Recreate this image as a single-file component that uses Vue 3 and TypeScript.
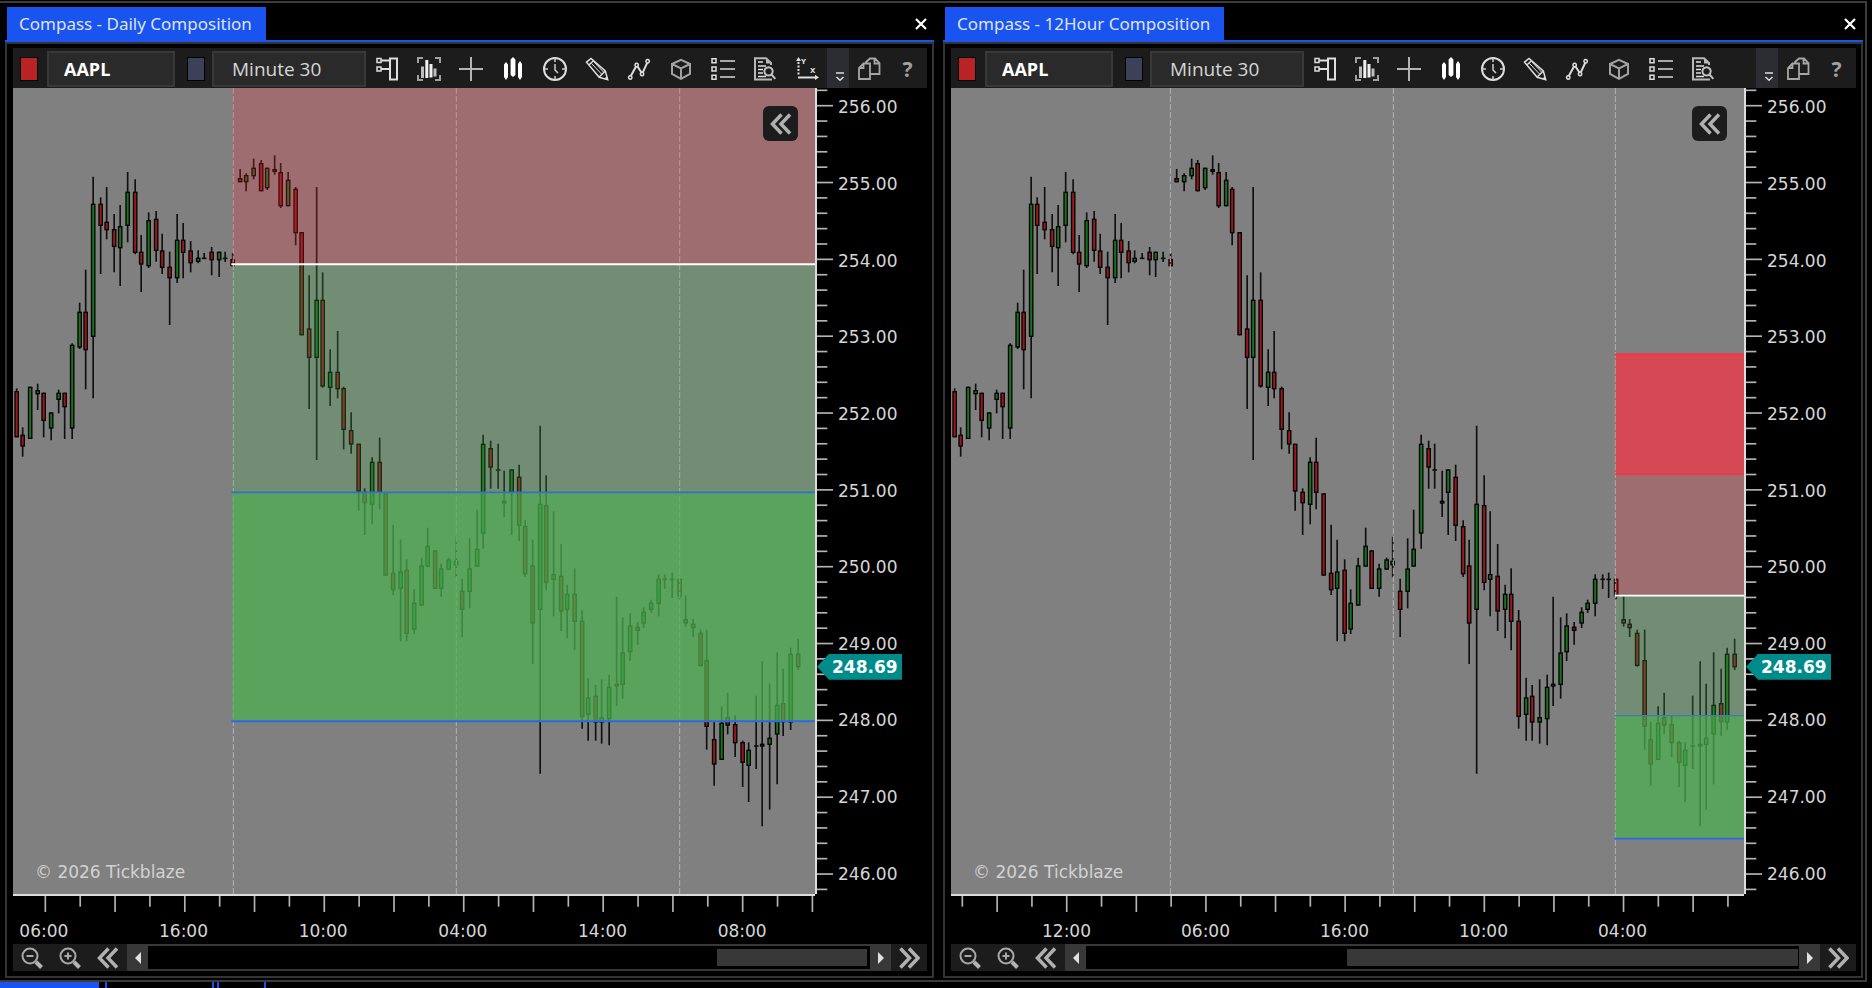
<script setup lang="ts">
import { ref } from 'vue'

type Candle = [high: number, top: number, bottom: number, low: number, side: 'u' | 'd' | 'n']

interface Shape {
  d: string
  fill?: boolean
  w?: number
  tone?: string
}

interface Tool {
  label: string
  shapes: Shape[]
  marks?: { x: number; y: number; t: string }[]
}

interface Zone {
  from: number
  to: number
  color: string
}

interface Level {
  y: number
  w: number
  color: string
}

interface Chart {
  id: string
  title: string
  width: number
  pitch: number
  sessions: number[]
  zoneStart: number
  zones: Zone[]
  levels: Level[]
  tickStart: number
  tickPitch: number
  majorFirst: boolean
  times: string[]
  labelStart: number
  labelStep: number
  thumbStart: number
  thumbWidth: number
  tools: number
}

// Plot coordinates use three units for every pixel.
const PLOT_HEIGHT = 2418
const CANDLE_TOP = 156
const SNAP = 4.5

const candles: Candle[] = [
  [745, 753, 892, 892, 'd'], [862, 884, 920, 950, 'd'], [740, 740, 897, 897, 'u'], [731, 750, 763, 810, 'u'],
  [758, 758, 843, 892, 'd'], [817, 817, 866, 901, 'u'], [749, 758, 780, 820, 'u'], [758, 758, 802, 897, 'd'],
  [610, 614, 866, 897, 'u'], [488, 515, 623, 627, 'u'], [389, 515, 631, 748, 'd'], [110, 191, 591, 775, 'u'],
  [172, 191, 258, 402, 'd'], [141, 245, 271, 298, 'd'], [222, 267, 321, 397, 'd'], [195, 258, 325, 438, 'u'],
  [96, 155, 258, 307, 'u'], [118, 155, 339, 343, 'd'], [285, 335, 374, 456, 'd'], [217, 240, 379, 384, 'u'],
  [213, 236, 333, 365, 'd'], [281, 331, 384, 402, 'd'], [335, 380, 415, 555, 'd'], [222, 299, 415, 429, 'u'],
  [249, 299, 339, 415, 'd'], [303, 331, 370, 397, 'd'], [331, 353, 366, 370, 'u'], [339, 353, 357, 357, 'n'],
  [321, 335, 361, 406, 'd'], [335, 335, 361, 411, 'u'], [335, 353, 357, 366, 'n'], [339, 357, 379, 379, 'd'],
  [87, 114, 127, 127, 'd'], [100, 105, 127, 154, 'u'], [56, 83, 109, 118, 'u'], [60, 69, 154, 154, 'd'],
  [83, 83, 145, 150, 'u'], [46, 87, 96, 104, 'd'], [69, 96, 199, 204, 'd'], [96, 119, 199, 199, 'u'],
  [141, 146, 280, 316, 'd'], [276, 276, 586, 586, 'd'], [406, 565, 654, 807, 'd'], [141, 479, 654, 960, 'u'],
  [397, 479, 740, 743, 'd'], [628, 695, 744, 798, 'u'], [573, 695, 748, 775, 'd'], [740, 744, 870, 928, 'd'],
  [817, 870, 914, 941, 'd'], [911, 911, 1055, 1112, 'd'], [1045, 1055, 1090, 1185, 'd'], [952, 965, 1095, 1153, 'u'],
  [893, 965, 1059, 1108, 'd'], [1060, 1060, 1307, 1307, 'd'], [1154, 1298, 1351, 1365, 'd'], [1199, 1294, 1347, 1504, 'u'],
  [1258, 1289, 1482, 1504, 'd'], [1348, 1388, 1469, 1482, 'u'], [1253, 1276, 1397, 1397, 'u'], [1163, 1217, 1280, 1280, 'u'],
  [1231, 1231, 1347, 1347, 'd'], [1271, 1285, 1347, 1370, 'u'], [1253, 1258, 1289, 1289, 'u'], [1190, 1262, 1276, 1312, 'u'],
  [1316, 1352, 1410, 1491, 'd'], [1195, 1285, 1356, 1405, 'u'], [1109, 1226, 1280, 1280, 'u'], [884, 911, 1181, 1226, 'u'],
  [902, 924, 983, 1046, 'd'], [911, 988, 992, 1046, 'n'], [992, 1082, 1091, 1131, 'u'], [988, 988, 1059, 1185, 'u'],
  [974, 1010, 1158, 1203, 'd'], [1141, 1158, 1303, 1311, 'd'], [1199, 1276, 1451, 1572, 'd'], [857, 1091, 1410, 1901, 'u'],
  [1006, 1095, 1329, 1351, 'd'], [1114, 1302, 1320, 1429, 'u'], [1212, 1307, 1415, 1473, 'd'], [1334, 1361, 1410, 1495, 'u'],
  [1285, 1361, 1446, 1531, 'd'], [1410, 1442, 1731, 1766, 'd'], [1613, 1672, 1725, 1802, 'u'], [1635, 1667, 1748, 1802, 'd'],
  [1618, 1731, 1748, 1811, 'u'], [1604, 1640, 1738, 1816, 'u'], [1370, 1631, 1640, 1698, 'u'], [1432, 1537, 1635, 1676, 'u'],
  [1420, 1456, 1537, 1563, 'u'], [1446, 1460, 1473, 1514, 'd'], [1402, 1415, 1451, 1464, 'u'], [1379, 1388, 1410, 1419, 'u'],
  [1303, 1316, 1392, 1429, 'u'], [1303, 1316, 1320, 1347, 'n'], [1298, 1316, 1320, 1374, 'n'], [1316, 1316, 1370, 1378, 'd'],
  [1366, 1437, 1451, 1460, 'd'], [1437, 1451, 1465, 1491, 'd'], [1469, 1478, 1578, 1580, 'd'], [1469, 1560, 1761, 1829, 'd'],
  [1745, 1797, 1874, 1937, 'd'], [1699, 1748, 1860, 1860, 'u'], [1658, 1731, 1757, 1783, 'd'], [1726, 1752, 1810, 1851, 'd'],
  [1802, 1806, 1869, 1941, 'd'], [1807, 1829, 1878, 1986, 'u'], [1667, 1816, 1820, 1887, 'n'], [1564, 1811, 1820, 2059, 'd'],
  [1631, 1793, 1815, 2009, 'u'], [1537, 1694, 1784, 1933, 'u'], [1586, 1689, 1747, 1788, 'd'], [1523, 1541, 1748, 1770, 'u'],
  [1496, 1541, 1582, 1590, 'd'],
]

const RED_SOFT = 'rgba(248, 52, 64, 0.25)'
const RED_STRONG = 'rgba(242, 54, 69, 0.75)'
const GREEN_SOFT = 'rgba(76, 175, 80, 0.25)'
const GREEN_STRONG = 'rgba(76, 175, 80, 0.75)'

const charts: Chart[] = [
  {
    id: 'daily',
    title: 'Compass - Daily Composition',
    width: 2406,
    pitch: 4.652,
    sessions: [661, 1330, 2000],
    zoneStart: 658,
    zones: [
      { from: 0, to: 529, color: RED_SOFT },
      { from: 529, to: 1213, color: GREEN_SOFT },
      { from: 1213, to: 1900, color: GREEN_STRONG },
    ],
    levels: [
      { y: 529, w: 6, color: '#ffffff' },
      { y: 1213, w: 5, color: '#3470cc' },
      { y: 1900, w: 6, color: '#2f66e8' },
    ],
    tickStart: 97,
    tickPitch: 104.6,
    majorFirst: true,
    times: ['06:00', '16:00', '10:00', '04:00', '14:00', '08:00'],
    labelStart: -117,
    labelStep: 419,
    thumbStart: 569 / 722,
    thumbWidth: 150 / 722,
    tools: 11,
  },
  {
    id: 'half-day',
    title: 'Compass - 12Hour Composition',
    width: 2379,
    pitch: 4.645,
    sessions: [658, 1327, 1993],
    zoneStart: 1994,
    zones: [
      { from: 796, to: 1159, color: RED_STRONG },
      { from: 1159, to: 1523, color: RED_SOFT },
      { from: 1523, to: 1883, color: GREEN_SOFT },
      { from: 1883, to: 2252, color: GREEN_STRONG },
    ],
    levels: [
      { y: 800, w: 7, color: '#f23645' },
      { y: 1159, w: 4, color: '#f23645' },
      { y: 1523, w: 5, color: '#ffffff' },
      { y: 1883, w: 4, color: '#4078b8' },
      { y: 2252, w: 5, color: '#2f66e8' },
    ],
    tickStart: 34,
    tickPitch: 104.4,
    majorFirst: false,
    times: ['12:00', '06:00', '16:00', '10:00', '04:00'],
    labelStart: 138,
    labelStep: 417,
    thumbStart: 261 / 713,
    thumbWidth: 451 / 713,
    tools: 10,
  },
]

const prices = Array.from({ length: 11 }, (_, i) => (256 - i).toFixed(2))
const priceTicks = Array.from({ length: 53 }, (_, i) => ({ y: 7 + i * 46.1, major: i % 5 === 1 }))

const symbols = ref(charts.map(() => 'AAPL'))
const intervals = ref(charts.map(() => 'Minute 30'))

function bars(chart: Chart) {
  return candles.map(([high, top, bottom, low, side], i) => ({
    x: 11 + SNAP * Math.floor(i * chart.pitch + 0.2),
    high: high + CANDLE_TOP,
    top: top + CANDLE_TOP,
    bottom: bottom + CANDLE_TOP,
    low: low + CANDLE_TOP,
    side,
  }))
}

function timeTicks(chart: Chart) {
  return Array.from({ length: 23 }, (_, i) => ({
    x: chart.tickStart + i * chart.tickPitch,
    h: (i % 2 === 0) === chart.majorFirst ? 48 : 32,
  }))
}

function labelStyle(chart: Chart) {
  return {
    marginLeft: `${(chart.labelStart / chart.width) * 100}%`,
    width: `${((chart.labelStep * chart.times.length) / chart.width) * 100}%`,
  }
}

const tools: Tool[] = [
  {
    label: 'Order panel',
    shapes: [
      { d: 'M15 1.5h7v21h-7z', w: 2 },
      { d: 'M2 1.5h4v4H2zM2 10h4v4H2z' },
      { d: 'M6 3.5h9M6 12h9', w: 2 },
    ],
  },
  {
    label: 'Fit chart',
    shapes: [
      { d: 'M1 6V1h5M18 1h5v5M23 18v5h-5M6 23H1v-5', w: 2, tone: '#a0a0a0' },
      { d: 'M4 9.5h3V21H4zM16.5 11.5h3v8h-3z', fill: true, tone: '#bdbdbd' },
      { d: 'M8.3 3h3v18h-3zM12.5 7h3v13.5h-3z', fill: true, tone: '#f0f0f0' },
    ],
  },
  { label: 'Crosshair', shapes: [{ d: 'M12 0v24M0 12h24', w: 2, tone: '#b4b4b4' }] },
  {
    label: 'Chart style',
    shapes: [
      { d: 'M3 7.5 5 5l2 2.5V20l-2 3-2-3zM9.6 2.5 12 0l2.4 2.5V18L12 20l-2.4-2zM17 7l2-3 2 3v13l-2 3-2-3z', fill: true, tone: '#ffffff' },
    ],
  },
  {
    label: 'Sessions',
    shapes: [
      { d: 'M12 1a11 11 0 1 0 0 22 11 11 0 0 0 0-22z', w: 2 },
      { d: 'M12 1v4M12 19v4M1 12h4M19 12h4M12 7v6l3 3', tone: '#cfcfcf' },
    ],
  },
  {
    label: 'Draw',
    shapes: [
      { d: 'M1.5 5.2 6 1.5 20.3 14l2.4 8.6-8.5-2.3zM14 20.3l6.3-6.3M3.8 8 8.5 3.7' },
      { d: 'M6.5 6.5 17 17.5M9 5l9.5 10', w: 1 },
      { d: 'M19 22l3.7.7-.7-3.5z', fill: true },
    ],
  },
  {
    label: 'Indicators',
    shapes: [
      { d: 'M3.8 19 9 9.5M10.5 9.5l4 6M15.8 15.4l4.4-9.6', w: 2 },
      { d: 'M3.2 18.8a1.7 1.7 0 1 0 .1 0zM9.6 6.3a1.7 1.7 0 1 0 .1 0zM15 15.3a1.7 1.7 0 1 0 .1 0zM20.6 2.6a1.7 1.7 0 1 0 .1 0z' },
    ],
  },
  {
    label: 'Objects',
    shapes: [{ d: 'M12 2.8 21 7v10l-9 4.8L3 17V7zM3 7l9 4.5L21 7M12 11.5v10', w: 2, tone: '#a3a3a3' }],
  },
  {
    label: 'List',
    shapes: [
      { d: 'M1 1.8h4v4H1zM1 10h4v4H1zM1 18.3h4v4H1z' },
      { d: 'M9 4h15M9 12h15M9 20h15', w: 2, tone: '#a8a8a8' },
    ],
  },
  {
    label: 'Data window',
    shapes: [
      { d: 'M18 8V6l-5-4.8H2v21.3h17', w: 2, tone: '#b8b8b8' },
      { d: 'M13 1v5.5h5.5z', fill: true, tone: '#b8b8b8' },
      { d: 'M5 5h5M5 9h8M5 12.5h5M5 16h5M5 19.5h8' },
      { d: 'M15.5 10.2a4.2 4.2 0 1 0 .1 0zM18.5 17.5l3.8 4.3', w: 2, tone: '#c4c4c4' },
    ],
  },
  {
    label: 'Axes',
    shapes: [
      { d: 'M3.5 0 6 4H1zM20 17.8l4 2.6-4 2.6z', fill: true },
      { d: 'M3.5 5v2M3.5 8.5v2M3.5 12v2M3.5 15.5v2M3 20.4h18', w: 2 },
    ],
    marks: [
      { x: 6, y: 7, t: 'Y' },
      { x: 15, y: 16, t: 'X' },
    ],
  },
]
</script>

<template>
  <div class="app">
    <main class="frame">
      <section v-for="(chart, c) in charts" :key="chart.id" class="panel" :aria-label="chart.title">
        <header class="panel-head">
          <h2 class="tab">{{ chart.title }}</h2>
          <button class="close" type="button" aria-label="Close">
            <svg viewBox="0 0 12 12" width="12" height="12"><path d="M1 1l10 10M11 1L1 11" stroke="#fff" stroke-width="2.2" /></svg>
          </button>
        </header>

        <div class="panel-body">
          <div class="toolbar">
            <button class="swatch red" type="button" aria-label="Symbol link colour"></button>
            <input v-model="symbols[c]" class="symbol" type="text" aria-label="Symbol" />
            <button class="swatch blue" type="button" aria-label="Interval link colour"></button>
            <input v-model="intervals[c]" class="interval" type="text" aria-label="Interval" />
            <div class="tools">
              <button v-for="tool in tools.slice(0, chart.tools)" :key="tool.label" class="tool" type="button" :aria-label="tool.label">
                <svg viewBox="0 0 24 24" width="24" height="24">
                  <path
                    v-for="(s, k) in tool.shapes"
                    :key="k"
                    :d="s.d"
                    :fill="s.fill ? (s.tone ?? '#dedede') : 'none'"
                    :stroke="s.fill ? 'none' : (s.tone ?? '#dedede')"
                    :stroke-width="s.w ?? 1.5"
                  />
                  <text v-for="m in tool.marks ?? []" :key="m.t" class="mark" :x="m.x" :y="m.y">{{ m.t }}</text>
                </svg>
              </button>
            </div>
            <button class="overflow" type="button" aria-label="More tools">
              <svg viewBox="0 0 10 10" width="10" height="10"><path d="M1 1h8M1.5 5 5 8.300 8.500 5" fill="none" stroke="#dcdcdc" stroke-width="1.5" /></svg>
            </button>
            <button class="side-tool" type="button" aria-label="Duplicate">
              <svg viewBox="0 0 24 24" width="24" height="24">
                <path
                  d="M13 9V17.5V22H2V11l4.5-4.5H13V9M2 11h4.5V6.5M9 6V5l4-3.5h5L22.5 6v11H13M17.5 1.5V6.5h5"
                  fill="none"
                  stroke="#a6a6a6"
                  stroke-width="1.8"
                />
              </svg>
            </button>
            <button class="side-tool help" type="button" aria-label="Help">?</button>
          </div>

          <div class="chart">
            <div class="plot">
              <svg class="fill" :viewBox="`0 0 ${chart.width} ${PLOT_HEIGHT}`" preserveAspectRatio="none" role="img" aria-label="Price candles">
                <g v-for="(b, i) in bars(chart)" :key="i">
                  <path :d="`M${b.x} ${b.high}V${b.low}`" class="wick" />
                  <path v-if="b.side === 'n'" :d="`M${b.x - 7} ${b.top + 2}h14`" class="wick" />
                  <rect
                    v-else
                    :x="b.x - 5"
                    :y="b.top + 2"
                    width="10"
                    :height="Math.max(b.bottom - b.top - 4, 3)"
                    :class="b.side === 'u' ? 'up' : 'down'"
                  />
                </g>
                <path v-for="s in chart.sessions" :key="s" :d="`M${s} 0V${PLOT_HEIGHT}`" class="session" />
                <rect
                  v-for="z in chart.zones"
                  :key="z.from"
                  :x="chart.zoneStart"
                  :y="z.from"
                  :width="chart.width - chart.zoneStart"
                  :height="z.to - z.from"
                  :fill="z.color"
                />
                <path
                  v-for="l in chart.levels"
                  :key="l.y"
                  :d="`M${chart.zoneStart - 3} ${l.y}H${chart.width}`"
                  :stroke="l.color"
                  :stroke-width="l.w"
                />
              </svg>
              <button class="collapse" type="button" aria-label="Collapse">
                <svg viewBox="0 0 22 22" width="22" height="22"><path d="M11.5 1.5 2.5 11l9 9.500M20 1.500 11 11l9 9.500" class="chevrons" /></svg>
              </button>
              <small class="copyright">© 2026 Tickblaze</small>
            </div>

            <div class="price-axis">
              <svg class="price-ticks" :viewBox="`0 0 48 ${PLOT_HEIGHT}`" preserveAspectRatio="none">
                <path v-for="t in priceTicks" :key="t.y" :d="`M0 ${t.y}H${t.major ? 48 : 31}`" class="tick" />
              </svg>
              <div class="price-labels">
                <span v-for="p in prices" :key="p">{{ p }}</span>
              </div>
              <strong class="price-tag">248.69</strong>
            </div>

            <div class="time-axis">
              <svg class="time-ticks" :viewBox="`0 0 ${chart.width} 48`" preserveAspectRatio="none">
                <path v-for="t in timeTicks(chart)" :key="t.x" :d="`M${t.x} 0V${t.h}`" class="tick" />
              </svg>
              <div class="time-labels" :style="labelStyle(chart)">
                <span v-for="t in chart.times" :key="t">{{ t }}</span>
              </div>
            </div>
          </div>

          <div class="scroller">
            <button class="nav" type="button" aria-label="Zoom out">
              <svg viewBox="0 0 22 22" width="22" height="22">
                <circle cx="9" cy="9" r="7.5" class="lens" /><path d="M5.5 9h7" class="lens" /><path d="M15 15l5.5 5.5" class="handle" />
              </svg>
            </button>
            <button class="nav" type="button" aria-label="Zoom in">
              <svg viewBox="0 0 22 22" width="22" height="22">
                <circle cx="9" cy="9" r="7.5" class="lens" /><path d="M5.5 9h7M9 5.5v7" class="lens" /><path d="M15 15l5.5 5.5" class="handle" />
              </svg>
            </button>
            <button class="nav" type="button" aria-label="Scroll to start">
              <svg viewBox="0 0 22 22" width="22" height="22"><path d="M11.5 1.5 2.5 11l9 9.5M20 1.5 11 11l9 9.5" class="chevrons" /></svg>
            </button>
            <button class="step" type="button" aria-label="Scroll left">
              <svg viewBox="0 0 6 12" width="6" height="12"><path d="M6 0v12L0 6z" fill="#e0e0e0" /></svg>
            </button>
            <div class="track">
              <div class="thumb" :style="{ marginLeft: `${chart.thumbStart * 100}%`, width: `${chart.thumbWidth * 100}%` }"></div>
            </div>
            <button class="step" type="button" aria-label="Scroll right">
              <svg viewBox="0 0 6 12" width="6" height="12"><path d="M0 0v12l6-6z" fill="#e0e0e0" /></svg>
            </button>
            <button class="nav end" type="button" aria-label="Scroll to end">
              <svg viewBox="0 0 22 22" width="22" height="22"><path d="M2.5 1.5 11.5 11l-9 9.5M11 1.5 20 11l-9 9.5" class="chevrons" /></svg>
            </button>
          </div>
        </div>
      </section>
    </main>

    <footer class="dock">
      <span class="dock-tab active"></span>
      <span class="dock-tab wide"></span>
      <span class="dock-tab narrow"></span>
    </footer>
  </div>
</template>

<style>
html,
body {
  margin: 0;
  background: #000;
}
</style>

<style scoped>
.app {
  box-sizing: border-box;
  display: flex;
  flex-direction: column;
  height: 100vh;
  min-height: 480px;
  padding: 1px 5px 0 0;
  overflow: hidden;
  background: #000;
  color: #d6d6d6;
  font-family: 'DejaVu Sans', Verdana, sans-serif;
  font-size: 17px;
}

button,
input {
  box-sizing: border-box;
  margin: 0;
  padding: 0;
  border: 0;
  border-radius: 0;
  background: none;
  color: inherit;
  font: inherit;
}

svg {
  display: block;
}

.frame {
  display: grid;
  flex: 1;
  grid-template-columns: minmax(0, 929fr) minmax(0, 920fr);
  gap: 9px;
  min-height: 0;
  padding: 4px 2px 2px 5px;
  border: solid #3c3c3c;
  border-width: 2px 2px 2px 0;
}

.panel {
  display: flex;
  flex-direction: column;
  min-height: 0;
}

.panel-head {
  display: flex;
  align-items: center;
  justify-content: space-between;
  height: 33px;
  padding: 0 7px 0 2px;
  border-bottom: 2px solid #1a54f0;
}

.tab {
  margin: 0;
  padding: 0 14px 0 12px;
  background: #1a54f0;
  color: #dfe3ee;
  font: 400 17px/34px 'Noto Sans', 'Open Sans', sans-serif;
  white-space: nowrap;
}

.close {
  display: flex;
}

.panel-body {
  display: flex;
  flex: 1;
  flex-direction: column;
  min-height: 0;
  padding: 4px 5px 5px 6px;
  border: 2px solid #343434;
}

.toolbar {
  box-sizing: border-box;
  display: flex;
  align-items: center;
  height: 40px;
  padding-top: 2px;
  background: #1c1c1c;
  font-family: 'Open Sans', 'Noto Sans', sans-serif;
}

.swatch {
  flex: none;
  width: 18px;
  height: 24px;
  border: 1px solid #000;
}

.red {
  margin-left: 7px;
  background: #b92323;
}

.blue {
  margin-left: 12px;
  background: #3c4058;
}

.symbol,
.interval {
  flex: none;
  height: 36px;
  border: 2px solid #383838;
  background: #2a2a2a;
}

.symbol {
  width: 128px;
  margin-left: 9px;
  padding-left: 15px;
  color: #fff;
  font-size: 18px;
  font-weight: 700;
}

.interval {
  width: 154px;
  margin-left: 7px;
  padding-left: 18px;
  font-size: 19px;
}

.tools {
  display: flex;
  flex: 1;
  min-width: 0;
  overflow: hidden;
}

.tool {
  display: flex;
  flex: none;
  justify-content: center;
  width: 42px;
}

.mark {
  fill: #dedede;
  font: 700 7px 'DejaVu Sans', sans-serif;
}

.overflow {
  display: flex;
  flex: none;
  align-items: flex-end;
  align-self: stretch;
  justify-content: flex-end;
  width: 22px;
  margin-top: -2px;
  padding: 0 4px 6px 0;
  background: #2b2d33;
}

.side-tool {
  display: flex;
  flex: none;
  justify-content: center;
  width: 39px;
  color: #a0a0a0;
}

.help {
  font: 700 21px/28px 'Noto Sans', sans-serif;
}

.chart {
  display: grid;
  flex: 1;
  grid-template-rows: minmax(0, 1fr) 50px;
  grid-template-columns: minmax(0, 1fr) 112px;
  min-height: 0;
}

.plot {
  position: relative;
  min-height: 0;
  background: #808080;
}

.fill {
  width: 100%;
  height: 100%;
}

.wick {
  fill: none;
  stroke: #101010;
  stroke-width: 5;
}

.up,
.down {
  stroke: #000;
  stroke-width: 4;
}

.up {
  fill: #157518;
}

.down {
  fill: #9c181a;
}

.session {
  fill: none;
  stroke: #b4b4b4;
  stroke-width: 3;
  stroke-dasharray: 18 6;
}

.tick {
  fill: none;
  stroke: #b4b4b4;
  stroke-width: 5;
}

.collapse {
  position: absolute;
  top: 18px;
  right: 17px;
  display: flex;
  align-items: center;
  justify-content: center;
  width: 35px;
  height: 35px;
  border-radius: 6px;
  background: #1c1c1c;
}

.chevrons {
  fill: none;
  stroke: #b0b0b0;
  stroke-width: 3.5;
}

.copyright {
  position: absolute;
  bottom: 11px;
  left: 22px;
  color: #d2d2d2;
  font-size: 17px;
  line-height: 22px;
}

.price-axis {
  position: relative;
  display: flex;
  min-height: 0;
  border-left: 2px solid #dcdcdc;
}

.price-ticks {
  flex: none;
  width: 16px;
  height: 100%;
}

.price-labels {
  display: flex;
  flex-direction: column;
  margin: -19px 0 -18px 5px;
}

.price-labels span {
  display: flex;
  flex: 1;
  align-items: center;
}

.price-tag {
  position: absolute;
  top: 70.2%;
  left: 0;
  box-sizing: border-box;
  width: 85px;
  padding-left: 15px;
  background: #008b8b;
  clip-path: polygon(0 50%, 12px 0, 100% 0, 100% 100%, 12px 100%);
  color: #fff;
  font-weight: 700;
  line-height: 26px;
}

.time-axis {
  min-width: 0;
  border-top: 2px solid #dcdcdc;
}

.time-ticks {
  width: 100%;
  height: 16px;
}

.time-labels {
  display: flex;
  margin-top: 8px;
  line-height: 22px;
}

.time-labels span {
  flex: 1;
  text-align: center;
}

.scroller {
  display: flex;
  height: 27px;
}

.nav,
.step {
  display: flex;
  flex: none;
  align-items: center;
  justify-content: center;
}

.nav {
  width: 38px;
  background: #1c1c1c;
}

.end {
  width: 36px;
}

.step {
  width: 21px;
  background: #383838;
}

.lens {
  fill: none;
  stroke: #a8a8a8;
  stroke-width: 2;
}

.handle {
  stroke: #b4b4b4;
  stroke-width: 4;
}

.track {
  box-sizing: border-box;
  flex: 1;
  min-width: 0;
  padding: 3px 0;
  border: solid #383838;
  border-width: 2px 0;
}

.thumb {
  height: 100%;
  background: #383838;
}

.dock {
  display: flex;
  height: 6px;
}

.dock-tab {
  box-sizing: border-box;
  border: solid #1a54f0;
  border-width: 0 2px;
}

.active {
  width: 99px;
  background: #1a54f0;
}

.wide {
  width: 109px;
  margin-left: 6px;
}

.narrow {
  width: 49px;
  margin-left: 3px;
}
</style>
